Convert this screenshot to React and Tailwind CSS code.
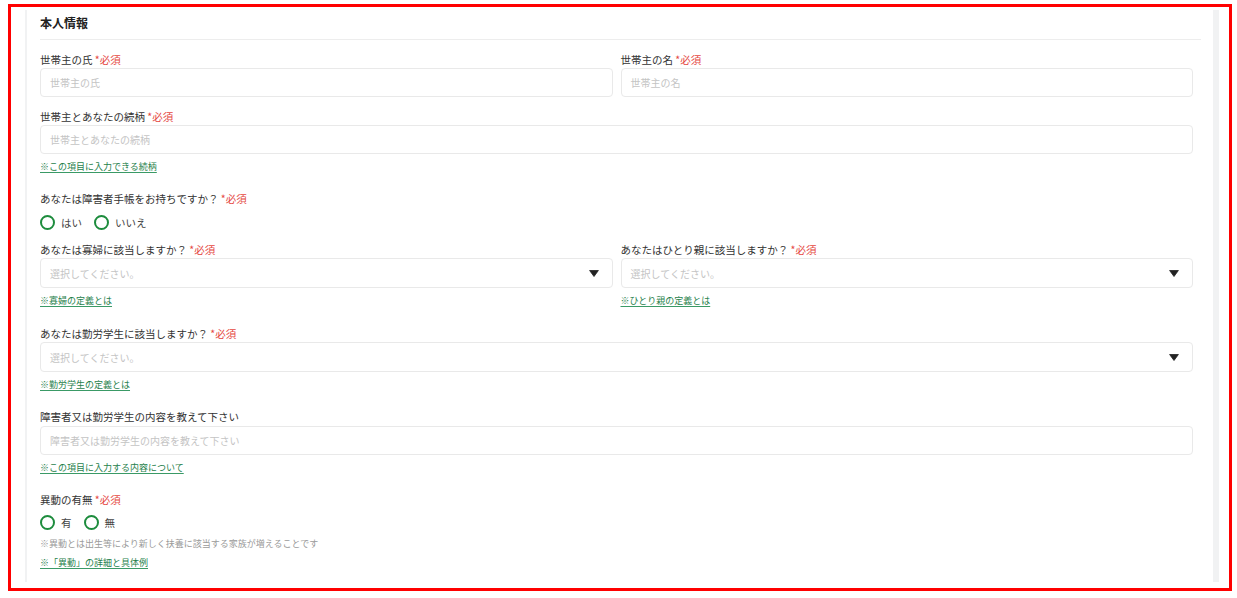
import React from "react";

const FONT = { fontFamily: '"Noto Sans CJK JP", "Noto Sans", sans-serif' };

function Label({ text, required, className = "" }) {
  return (
    <div className={`text-[10.5px] leading-[15px] text-[#333] whitespace-nowrap ${className}`}>
      {text}
      {required && <span className="text-[#e5483f]"> *必須</span>}
    </div>
  );
}

function Input({ placeholder, className = "" }) {
  return (
    <div
      className={`h-[29px] rounded-[4px] border border-[#e9e9e9] bg-white flex items-center pl-[9px] text-[10px] text-[#c4c4c4] ${className}`}
    >
      {placeholder}
    </div>
  );
}

function Select({ className = "" }) {
  return (
    <div
      className={`h-[30px] rounded-[4px] border border-[#e9e9e9] bg-white flex items-center justify-between pl-[9px] pr-[13px] text-[10px] text-[#c4c4c4] ${className}`}
    >
      <span>選択してください。</span>
      <svg width="10" height="7" viewBox="0 0 10 7">
        <path d="M0.6 0.5 H9.4 L5 6.5 Z" fill="#222" stroke="#222" strokeWidth="0.8" strokeLinejoin="round" />
      </svg>
    </div>
  );
}

function Link({ text, className = "" }) {
  return (
    <div className={`text-[9px] leading-[12px] ${className}`}>
      <span className="text-[#1f7f4c] underline underline-offset-[1.5px] decoration-[#3a9a66]">{text}</span>
    </div>
  );
}

function Radio({ label }) {
  return (
    <div className="flex items-center gap-[6px]">
      <span className="w-[15px] h-[15px] rounded-full border-2 border-[#1d8c3d] bg-white" />
      <span className="text-[10.5px] leading-[15px] text-[#444]">{label}</span>
    </div>
  );
}

export default function App() {
  return (
    <div className="w-[1237px] h-[598px] bg-white pt-[4px] pl-[8px]" style={FONT}>
      <div className="w-[1224px] h-[587px] border-[3px] border-[#ff0000] pt-[3px] pl-[14px] pr-[10px] pb-[6px]">
        <div className="h-full border-l-2 border-r-[6px] border-[#f1f2f3] pl-[13px] pr-[12px]">
          <div className="pt-[4px] pb-[7px] leading-[18px] border-b border-[#ededed] text-[12px] font-bold text-[#222]">
            本人情報
          </div>
          <div className="mr-[8px]">
            <div className="grid grid-cols-2 gap-x-[8px] mt-[12px]">
              <div>
                <Label text="世帯主の氏" required />
                <Input placeholder="世帯主の氏" className="mt-[1px]" />
              </div>
              <div>
                <Label text="世帯主の名" required />
                <Input placeholder="世帯主の名" className="mt-[1px]" />
              </div>
            </div>

            <Label text="世帯主とあなたの続柄" required className="mt-[12px]" />
            <Input placeholder="世帯主とあなたの続柄" className="mt-[1px]" />
            <Link text="※この項目に入力できる続柄" className="mt-[7px]" />

            <Label text="あなたは障害者手帳をお持ちですか？" required className="mt-[18px]" />
            <div className="flex items-center gap-[12px] mt-[9px] h-[14px]">
              <Radio label="はい" />
              <Radio label="いいえ" />
            </div>

            <div className="grid grid-cols-2 gap-x-[8px] mt-[13px]">
              <div>
                <Label text="あなたは寡婦に該当しますか？" required />
                <Select className="mt-[1px]" />
                <Link text="※寡婦の定義とは" className="mt-[7px]" />
              </div>
              <div>
                <Label text="あなたはひとり親に該当しますか？" required />
                <Select className="mt-[1px]" />
                <Link text="※ひとり親の定義とは" className="mt-[7px]" />
              </div>
            </div>

            <Label text="あなたは勤労学生に該当しますか？" required className="mt-[19px]" />
            <Select className="mt-[1px]" />
            <Link text="※勤労学生の定義とは" className="mt-[7px]" />

            <Label text="障害者又は勤労学生の内容を教えて下さい" className="mt-[18px]" />
            <Input placeholder="障害者又は勤労学生の内容を教えて下さい" className="mt-[2px]" />
            <Link text="※この項目に入力する内容について" className="mt-[7px]" />

            <Label text="異動の有無" required className="mt-[18px]" />
            <div className="flex items-center gap-[12px] mt-[8px] h-[14px]">
              <Radio label="有" />
              <Radio label="無" />
            </div>
            <div className="mt-[9px] text-[9px] leading-[12px] text-[#9a9a9a]">
              ※異動とは出生等により新しく扶養に該当する家族が増えることです
            </div>
            <Link text="※「異動」の詳細と具体例" className="mt-[7px]" />
          </div>
        </div>
      </div>
    </div>
  );
}
